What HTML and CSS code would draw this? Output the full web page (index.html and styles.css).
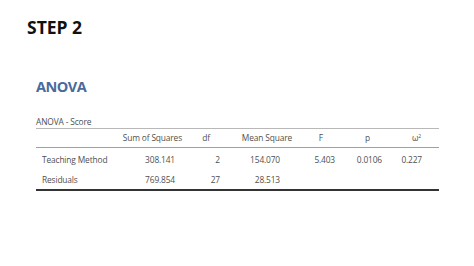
FILE: index.html
```html
<!DOCTYPE html>
<html>
<head>
<meta charset="utf-8">
<link rel="stylesheet" href="styles.css">
</head>
<body>
<div class="page">
  <h1 class="step">STEP 2</h1>
  <section class="result">
    <h2 class="heading">ANOVA</h2>
    <div class="caption">ANOVA - Score</div>
    <table class="anova">
      <colgroup>
        <col class="c-label"><col class="c-ss"><col class="c-df"><col class="c-ms"><col class="c-f"><col class="c-p"><col class="c-w">
      </colgroup>
      <thead>
        <tr>
          <th></th>
          <th>Sum of Squares</th>
          <th>df</th>
          <th>Mean Square</th>
          <th>F</th>
          <th>p</th>
          <th>ω<sup>2</sup></th>
        </tr>
      </thead>
      <tbody>
        <tr class="first">
          <td>Teaching Method</td>
          <td>308.141</td>
          <td>2</td>
          <td>154.070</td>
          <td>5.403</td>
          <td>0.0106</td>
          <td>0.227</td>
        </tr>
        <tr class="last">
          <td>Residuals</td>
          <td>769.854</td>
          <td>27</td>
          <td>28.513</td>
          <td></td>
          <td></td>
          <td></td>
        </tr>
      </tbody>
    </table>
  </section>
</div>
</body>
</html>
```

FILE: styles.css
```css
html, body {
  margin: 0;
  padding: 0;
  background: #ffffff;
}

.page {
  width: 474px;
  height: 266px;
  padding: 15px 0 0 27px;
  box-sizing: border-box;
  font-family: "Open Sans", "Noto Sans", sans-serif;
}

.step {
  margin: 0;
  font-size: 17.5px;
  line-height: 24px;
  font-weight: 700;
  color: #111111;
}

.result {
  margin: 38px 0 0 9px;
}

.heading {
  margin: 0;
  font-size: 14.5px;
  line-height: 20px;
  font-weight: 700;
  color: #4a6a9c;
  letter-spacing: -0.5px;
}

.caption {
  margin-top: 19px;
  font-size: 8.4px;
  line-height: 12px;
  color: #505050;
  letter-spacing: -0.15px;
}

.anova {
  margin-top: 0;
  border-collapse: collapse;
  table-layout: fixed;
  width: 403px;
  font-size: 8.4px;
  letter-spacing: -0.15px;
  color: #505050;
}

.c-label { width: 79px; }
.c-ss { width: 75px; }
.c-df { width: 34px; }
.c-ms { width: 72px; }
.c-f { width: 44px; }
.c-p { width: 48px; }
.c-w { width: 51px; }

.anova thead tr {
  border-top: 1px solid #b8b8b8;
  border-bottom: 1px solid #a0a0a0;
}

.anova th {
  font-weight: 400;
  height: 17px;
  padding: 0 0 1px 0;
  text-align: right;
  line-height: 10px;
}

.anova sup {
  font-size: 5px;
  vertical-align: 3px;
  line-height: 0;
}

.anova td {
  padding: 0;
  text-align: right;
  line-height: 10px;
}

.anova td:first-child {
  text-align: left;
  padding-left: 6px;
}

.anova tr.first td { height: 21px; padding-top: 1px; }
.anova tr.last td { height: 19px; }
.anova tr.last { border-bottom: 2px solid #333333; }

.anova th:nth-child(2) { padding-right: 8px; }
.anova th:nth-child(3) { padding-right: 14px; }
.anova th:nth-child(4) { padding-right: 4px; }
.anova th:nth-child(5) { padding-right: 17px; }
.anova th:nth-child(6) { padding-right: 18px; }
.anova th:nth-child(7) { padding-right: 18px; }

.anova td:nth-child(2) { padding-right: 15px; }
.anova td:nth-child(3) { padding-right: 4px; }
.anova td:nth-child(4) { padding-right: 16px; }
.anova td:nth-child(5) { padding-right: 5px; }
.anova td:nth-child(6) { padding-right: 6px; }
.anova td:nth-child(7) { padding-right: 17px; }
```
